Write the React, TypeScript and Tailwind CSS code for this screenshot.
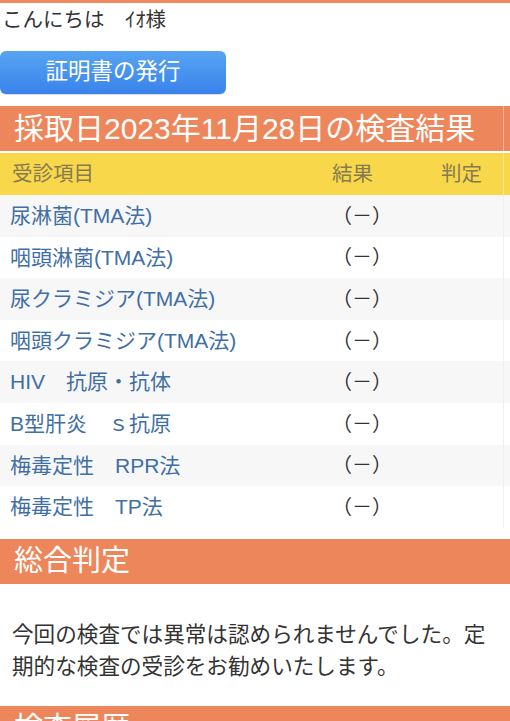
import React from "react";

const rows = [
  "尿淋菌(TMA法)",
  "咽頭淋菌(TMA法)",
  "尿クラミジア(TMA法)",
  "咽頭クラミジア(TMA法)",
  "HIV　抗原・抗体",
  "B型肝炎　ｓ抗原",
  "梅毒定性　RPR法",
  "梅毒定性　TP法",
];

export default function App() {
  return (
    <div
      className="w-[510px] h-[721px] overflow-hidden bg-white text-[#333]"
      style={{ fontFamily: '"Liberation Sans", "Noto Sans CJK JP", sans-serif' }}
    >
      <div className="h-[3px] bg-[#ee8a5e]" />
      <div className="pl-[2px] pt-[4px] text-[20.5px] leading-[26px] text-[#333]">
        こんにちは　ｲｵ様
      </div>
      <div className="mt-[18px] w-[226px] h-[43px] rounded-[6px] bg-gradient-to-b from-[#57a4f3] to-[#3a82ea] flex items-center justify-center text-white text-[22.5px] leading-none shadow-[0_1px_1px_rgba(0,0,0,0.15)]">
        証明書の発行
      </div>

      <div className="mt-[12px] bg-[#ee865b]">
        <div className="w-[504px] h-[45px] border-r border-white/40 flex items-center pl-[14px] text-white text-[30px] leading-none">
          採取日2023年11月28日の検査結果
        </div>
      </div>

      <div className="mt-[2px] bg-[#f9d74a]">
        <div className="w-[504px] h-[42px] border-r border-white/40 flex items-center text-[20.5px] text-[#857a52]">
          <div className="w-[332px] pl-[12px]">受診項目</div>
          <div className="w-[109px]">結果</div>
          <div className="flex-1">判定</div>
        </div>
      </div>

      {rows.map((r, i) => (
        <div key={i} className={i % 2 === 0 ? "bg-[#f7f7f7]" : "bg-white"}>
          <div className="w-[504px] h-[41.6px] border-r border-[#efefef] flex items-center text-[21px]">
            <div className="w-[332px] pl-[10px] text-[#3f6fa4]">{r}</div>
            <div className="w-[109px] text-[20px] text-[#333]">（－）</div>
            <div className="flex-1" />
          </div>
        </div>
      ))}

      <div className="mt-[11px] h-[45px] bg-[#ee865b] flex items-center pl-[14px] text-white text-[29px] leading-none">
        総合判定
      </div>

      <p className="mt-[35px] px-[12px] text-[21.6px] leading-[32px] text-[#333]">
        今回の検査では異常は認められませんでした。定期的な検査の受診をお勧めいたします。
      </p>

      <div className="mt-[23px] h-[45px] bg-[#ee865b] flex items-center pl-[14px] text-white text-[29px] leading-none">
        検査履歴
      </div>
    </div>
  );
}
